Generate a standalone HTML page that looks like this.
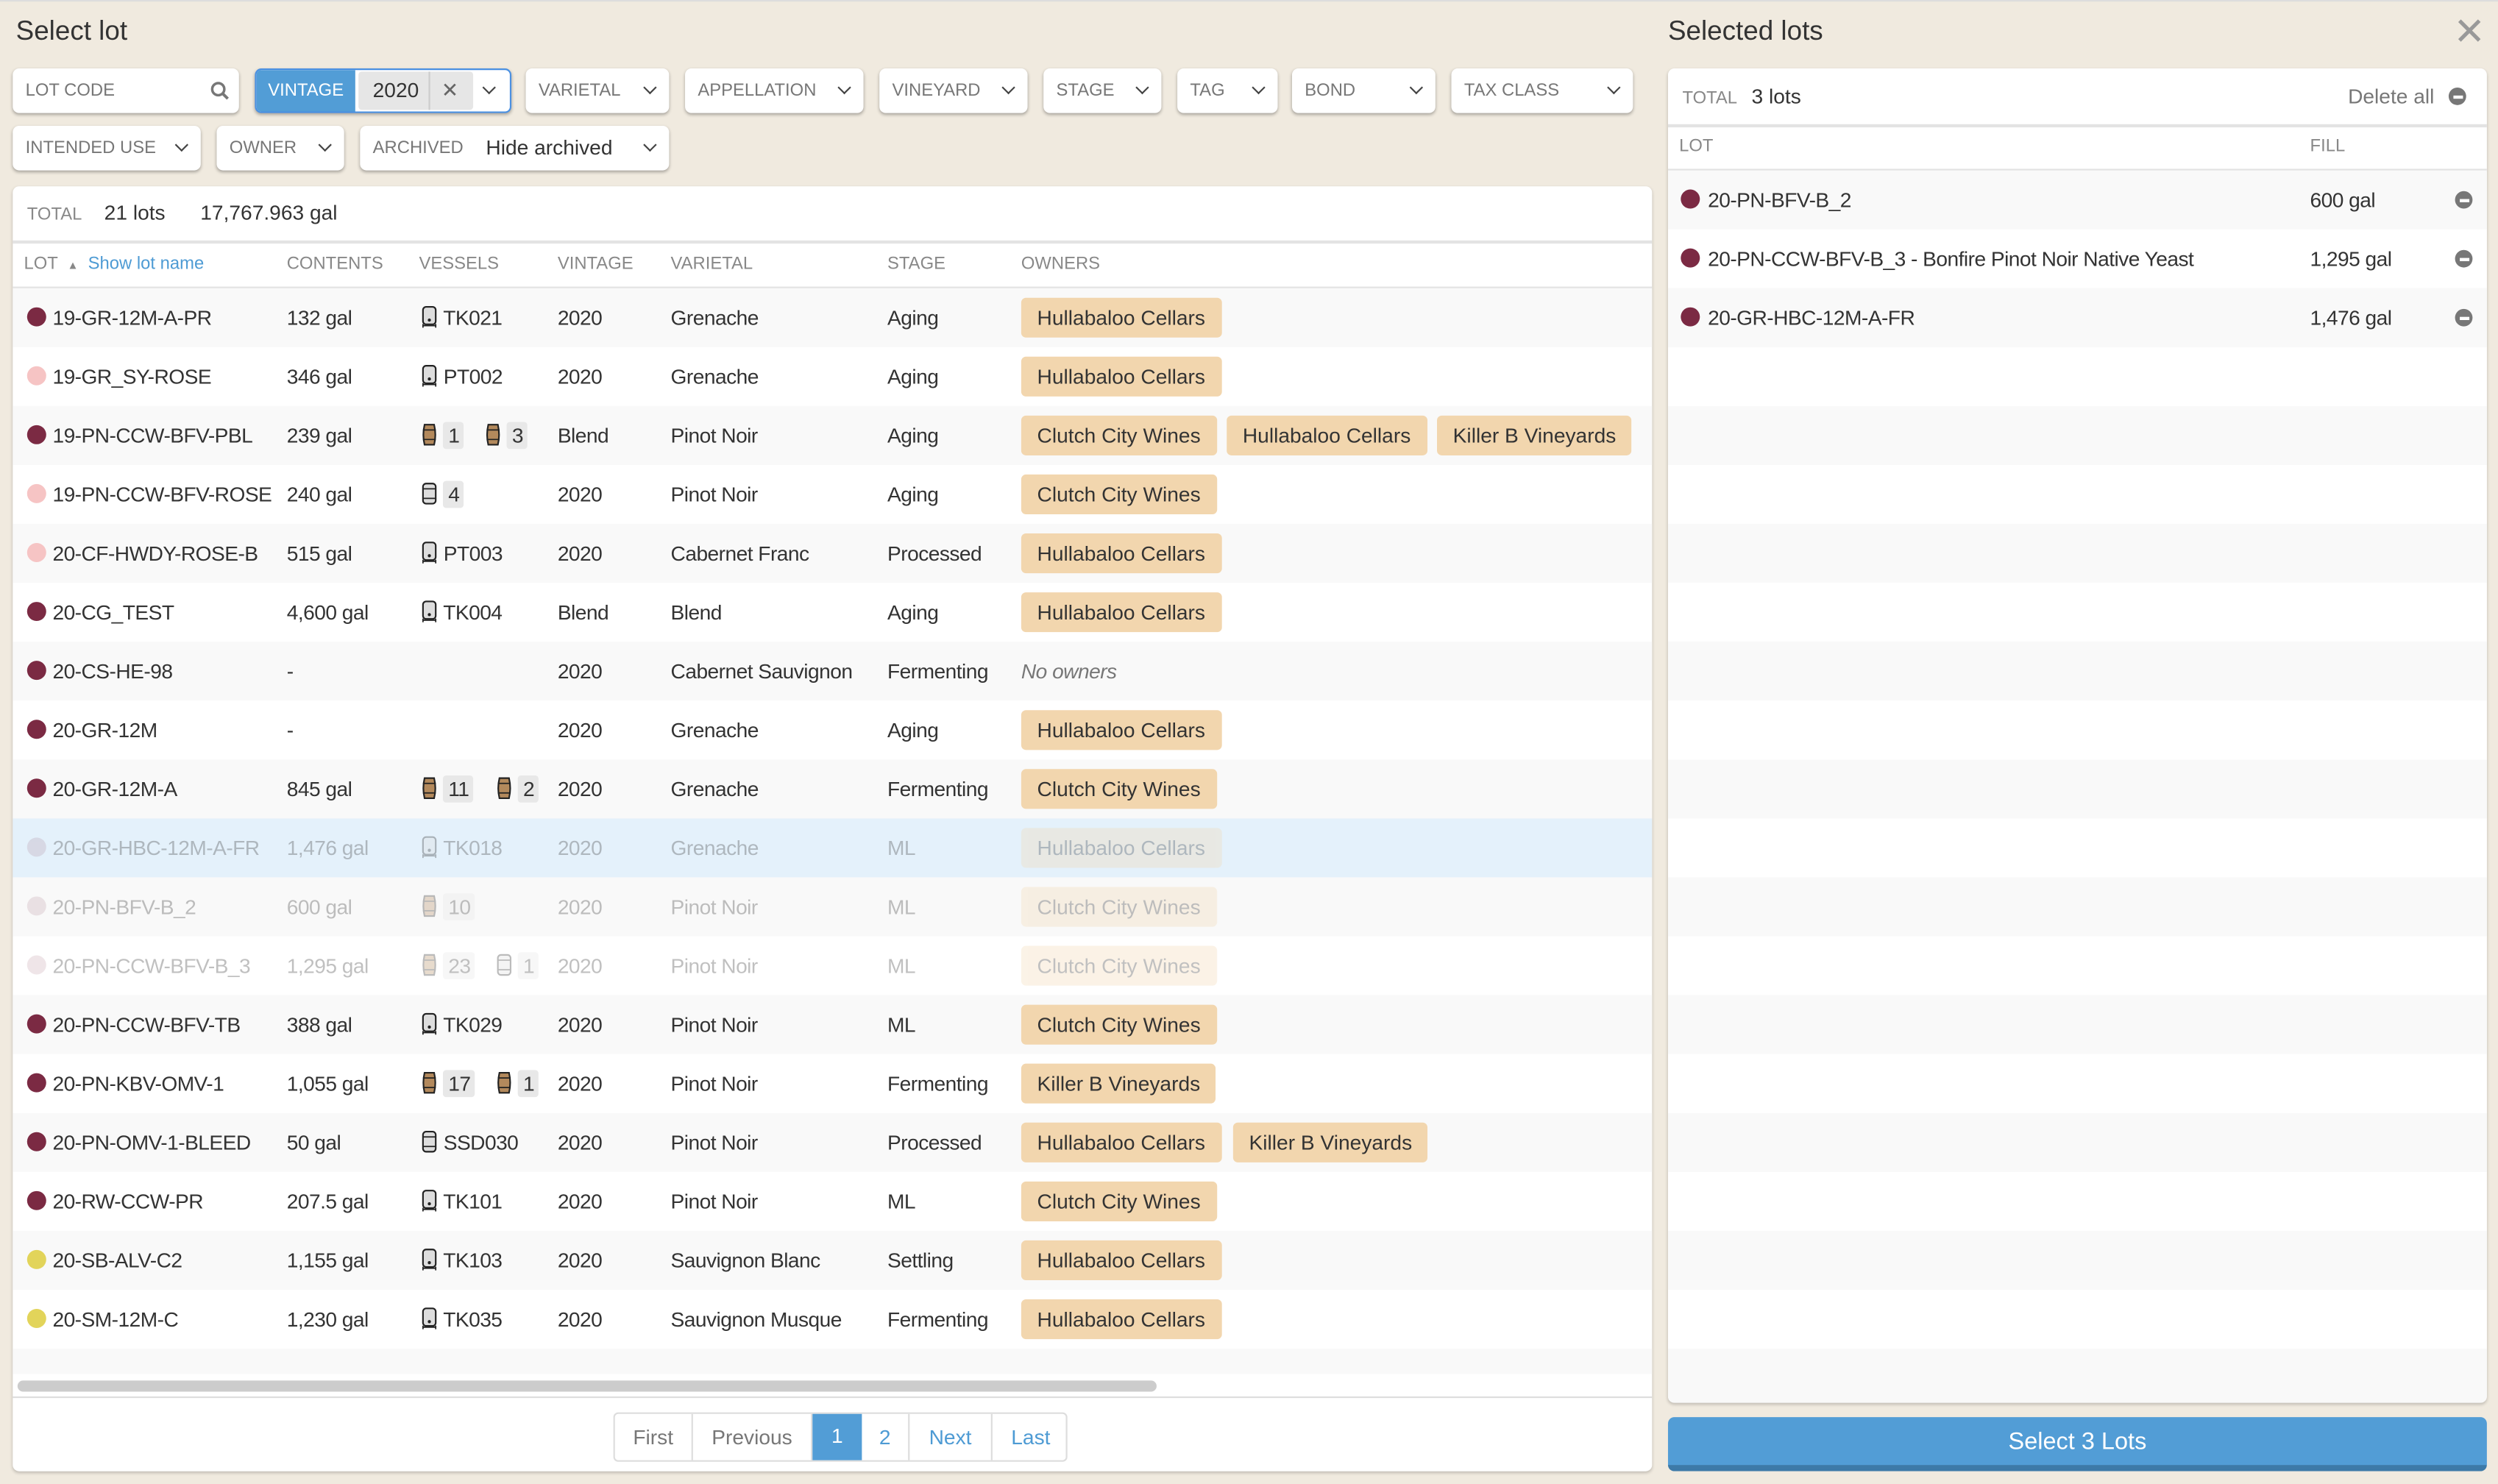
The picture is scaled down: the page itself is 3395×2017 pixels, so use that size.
<!DOCTYPE html>
<html><head><meta charset="utf-8"><style>
*{box-sizing:border-box;margin:0;padding:0}
html,body{width:3395px;height:2017px;overflow:hidden;background:#f0eadf}
#s{position:absolute;left:0;top:0;width:1568px;height:932px;transform:scale(2.1652,2.1642);transform-origin:0 0;font-family:"Liberation Sans",sans-serif;color:#333;font-size:13px;background:#f0eadf;border-top:1px solid #ddd}
.a{position:absolute}
.h{font-size:17px;color:#333}
.f{position:absolute;height:28px;background:#fff;border-radius:4px;box-shadow:0 1px 2px rgba(0,0,0,.3);font-size:11px;color:#777;line-height:28px;padding-left:8px}
.chev{display:inline-block;width:6px;height:6px;border-right:1.2px solid #444;border-bottom:1.2px solid #444;transform:rotate(45deg);position:absolute;top:9px}
.panel{position:absolute;background:#fff;border-radius:4px;box-shadow:0 1px 2px rgba(0,0,0,.2)}
.row{position:absolute;left:0;right:0;height:37px;line-height:37px;white-space:nowrap;letter-spacing:-0.25px}
.row span{position:absolute}
.odd{background:#f9f9f9}
.dot{display:inline-block;width:12px;height:12px;border-radius:50%;position:absolute;top:12px;left:9px}
.tag{position:absolute;top:6px;height:25px;line-height:25px;background:#f2d6ae;border-radius:3px;padding:0 10px 0 10px;color:#333;letter-spacing:0}
.cnt{background:#e8e8e8;padding:0 3px;border-radius:2px;line-height:17px;display:inline-block}
.th{font-size:11px;color:#888;position:absolute;top:0;line-height:29px}
.fade{opacity:.3}
.min{position:absolute;width:11px;height:11px;border-radius:50%;background:#777;top:13px}
.min:after{content:"";position:absolute;left:2.5px;top:4.5px;width:6px;height:2px;background:#fff}
.pg{position:absolute;top:0;height:30px;line-height:30px;text-align:center;border-right:1px solid #ddd;color:#4e9bd4;font-size:13px}
</style></head><body><div id="s">
<div class="a h" style="left:10px;top:9px">Select lot</div>
<div class="a h" style="left:1047px;top:9px">Selected lots</div>
<div class="a" style="left:1540px;top:5px;font-size:24px;color:#999;font-weight:300">✕</div>

<div class="f" style="left:8px;top:42px;width:142px">LOT CODE<svg class="a" style="right:6px;top:8px" width="12" height="12" viewBox="0 0 12 12"><circle cx="5" cy="5" r="3.8" fill="none" stroke="#777" stroke-width="1.6"/><path d="M8 8l3 3" stroke="#777" stroke-width="1.8"/></svg></div>
<div class="f" style="left:160px;top:42px;width:161px;padding:0;border:1px solid #4a90e2;overflow:hidden"><div class="a" style="left:0;top:0;width:62px;height:28px;background:#529dd6;color:#fff;text-align:center;line-height:26px">VINTAGE</div><div class="a" style="left:64px;top:1px;width:72px;height:24px;background:#e6e6e6;border-radius:2px;line-height:24px;color:#333;font-size:13px;padding-left:9px">2020<span class="a" style="left:44px;top:0;width:1px;height:24px;background:#ccc"></span><span class="a" style="left:52px;color:#666">✕</span></div><span class="chev" style="right:10px;top:8px"></span></div>
<div class="f" style="left:330px;top:42px;width:90px">VARIETAL<span class="chev" style="right:9px"></span></div>
<div class="f" style="left:430px;top:42px;width:112px">APPELLATION<span class="chev" style="right:9px"></span></div>
<div class="f" style="left:552px;top:42px;width:93px">VINEYARD<span class="chev" style="right:9px"></span></div>
<div class="f" style="left:655px;top:42px;width:74px">STAGE<span class="chev" style="right:9px"></span></div>
<div class="f" style="left:739px;top:42px;width:63px">TAG<span class="chev" style="right:9px"></span></div>
<div class="f" style="left:811px;top:42px;width:90px">BOND<span class="chev" style="right:9px"></span></div>
<div class="f" style="left:911px;top:42px;width:114px">TAX CLASS<span class="chev" style="right:9px"></span></div>
<div class="f" style="left:8px;top:78px;width:118px">INTENDED USE<span class="chev" style="right:9px"></span></div>
<div class="f" style="left:136px;top:78px;width:80px">OWNER<span class="chev" style="right:9px"></span></div>
<div class="f" style="left:226px;top:78px;width:194px">ARCHIVED<span class="a" style="left:79px;color:#333;font-size:13px">Hide archived</span><span class="chev" style="right:9px"></span></div>

<div class="panel" style="left:8px;top:116px;width:1029px;height:807px;overflow:hidden">
<div class="a" style="left:9px;top:0;line-height:34px"><span style="font-size:11px;color:#888">TOTAL</span><span style="margin-left:14px">21 lots</span><span style="margin-left:22px">17,767.963 gal</span></div>
<div class="a" style="left:0;right:0;top:34px;height:2px;background:#e3e3e3"></div>
<div class="a" style="left:0;right:0;top:35px;height:29px">
<span class="th" style="left:7px">LOT <span style="font-size:7px;margin-left:3px">▲</span> <span style="color:#4e9bd4;font-size:11px;margin-left:3px">Show lot name</span></span>
<span class="th" style="left:172px">CONTENTS</span><span class="th" style="left:255px">VESSELS</span><span class="th" style="left:342px">VINTAGE</span><span class="th" style="left:413px">VARIETAL</span><span class="th" style="left:549px">STAGE</span><span class="th" style="left:633px">OWNERS</span></div>
<div class="a" style="left:0;right:0;top:63px;height:2px;background:#e3e3e3"></div>
<div class="a" style="left:0;right:0;top:64px;bottom:0" id="rows">
<svg width="0" height="0" style="position:absolute"><defs>
<symbol id="tk" viewBox="0 0 10 14"><rect x="1" y="0.7" width="8" height="11" rx="2" fill="#ddd" stroke="#222" stroke-width="1"/><circle cx="5" cy="9" r="1" fill="#222"/><path d="M1 11.5v2.3M9 11.5v2.3M1 12.5h8" stroke="#222" stroke-width="0.8"/></symbol>
<symbol id="br" viewBox="0 0 10 14"><path d="M2 0.7h6q1.5 6.3 0 12.6h-6q-1.5-6.3 0-12.6z" fill="#b3895c" stroke="#222" stroke-width="1"/><path d="M1 4h8M1 10h8" stroke="#222" stroke-width="0.8"/></symbol>
<symbol id="ss" viewBox="0 0 10 14"><rect x="1" y="0.7" width="8" height="12.6" rx="2" fill="#ddd" stroke="#222" stroke-width="1"/><path d="M1 4h8M1 10h8" stroke="#222" stroke-width="0.8"/></symbol>
</defs></svg>

<div class="row odd" style="top:0"><i class="dot" style="background:#7b2a43"></i><span style="left:25px">19-GR-12M-A-PR</span><span style="left:172px">132 gal</span><span style="left:256px"><svg width="11" height="14" style="vertical-align:-2px"><use href="#tk"/></svg> TK021</span><span style="left:342px">2020</span><span style="left:413px">Grenache</span><span style="left:549px">Aging</span><div class="tag" style="left:633px">Hullabaloo Cellars</div></div>
<div class="row" style="top:37px"><i class="dot" style="background:#f6c4c4"></i><span style="left:25px">19-GR_SY-ROSE</span><span style="left:172px">346 gal</span><span style="left:256px"><svg width="11" height="14" style="vertical-align:-2px"><use href="#tk"/></svg> PT002</span><span style="left:342px">2020</span><span style="left:413px">Grenache</span><span style="left:549px">Aging</span><div class="tag" style="left:633px">Hullabaloo Cellars</div></div>
<div class="row odd" style="top:74px"><i class="dot" style="background:#7b2a43"></i><span style="left:25px">19-PN-CCW-BFV-PBL</span><span style="left:172px">239 gal</span><span style="left:256px"><svg width="11" height="14" style="vertical-align:-2px"><use href="#br"/></svg> <b class="cnt" style="font-weight:normal">1</b></span><span style="left:296px"><svg width="11" height="14" style="vertical-align:-2px"><use href="#br"/></svg> <b class="cnt" style="font-weight:normal">3</b></span><span style="left:342px">Blend</span><span style="left:413px">Pinot Noir</span><span style="left:549px">Aging</span><div class="tag" style="left:633px">Clutch City Wines</div><div class="tag" style="left:762px">Hullabaloo Cellars</div><div class="tag" style="left:894px">Killer B Vineyards</div></div>
<div class="row" style="top:111px"><i class="dot" style="background:#f6c4c4"></i><span style="left:25px">19-PN-CCW-BFV-ROSE</span><span style="left:172px">240 gal</span><span style="left:256px"><svg width="11" height="14" style="vertical-align:-2px"><use href="#ss"/></svg> <b class="cnt" style="font-weight:normal">4</b></span><span style="left:342px">2020</span><span style="left:413px">Pinot Noir</span><span style="left:549px">Aging</span><div class="tag" style="left:633px">Clutch City Wines</div></div>
<div class="row odd" style="top:148px"><i class="dot" style="background:#f6c4c4"></i><span style="left:25px">20-CF-HWDY-ROSE-B</span><span style="left:172px">515 gal</span><span style="left:256px"><svg width="11" height="14" style="vertical-align:-2px"><use href="#tk"/></svg> PT003</span><span style="left:342px">2020</span><span style="left:413px">Cabernet Franc</span><span style="left:549px">Processed</span><div class="tag" style="left:633px">Hullabaloo Cellars</div></div>
<div class="row" style="top:185px"><i class="dot" style="background:#7b2a43"></i><span style="left:25px">20-CG_TEST</span><span style="left:172px">4,600 gal</span><span style="left:256px"><svg width="11" height="14" style="vertical-align:-2px"><use href="#tk"/></svg> TK004</span><span style="left:342px">Blend</span><span style="left:413px">Blend</span><span style="left:549px">Aging</span><div class="tag" style="left:633px">Hullabaloo Cellars</div></div>
<div class="row odd" style="top:222px"><i class="dot" style="background:#7b2a43"></i><span style="left:25px">20-CS-HE-98</span><span style="left:172px">-</span><span style="left:342px">2020</span><span style="left:413px">Cabernet Sauvignon</span><span style="left:549px">Fermenting</span><span style="left:633px;font-style:italic;color:#777">No owners</span></div>
<div class="row" style="top:259px"><i class="dot" style="background:#7b2a43"></i><span style="left:25px">20-GR-12M</span><span style="left:172px">-</span><span style="left:342px">2020</span><span style="left:413px">Grenache</span><span style="left:549px">Aging</span><div class="tag" style="left:633px">Hullabaloo Cellars</div></div>
<div class="row odd" style="top:296px"><i class="dot" style="background:#7b2a43"></i><span style="left:25px">20-GR-12M-A</span><span style="left:172px">845 gal</span><span style="left:256px"><svg width="11" height="14" style="vertical-align:-2px"><use href="#br"/></svg> <b class="cnt" style="font-weight:normal">11</b></span><span style="left:303px"><svg width="11" height="14" style="vertical-align:-2px"><use href="#br"/></svg> <b class="cnt" style="font-weight:normal">2</b></span><span style="left:342px">2020</span><span style="left:413px">Grenache</span><span style="left:549px">Fermenting</span><div class="tag" style="left:633px">Clutch City Wines</div></div>
<div class="row" style="top:333px;background:#e4f1fb"><div class="fade"><i class="dot" style="background:#7b2a43;opacity:.4"></i><span style="left:25px">20-GR-HBC-12M-A-FR</span><span style="left:172px">1,476 gal</span><span style="left:256px"><svg width="11" height="14" style="vertical-align:-2px"><use href="#tk"/></svg> TK018</span><span style="left:342px">2020</span><span style="left:413px">Grenache</span><span style="left:549px">ML</span><div class="tag" style="left:633px">Hullabaloo Cellars</div></div></div>
<div class="row odd" style="top:370px"><div class="fade"><i class="dot" style="background:#7b2a43;opacity:.4"></i><span style="left:25px">20-PN-BFV-B_2</span><span style="left:172px">600 gal</span><span style="left:256px"><svg width="11" height="14" style="vertical-align:-2px"><use href="#br"/></svg> <b class="cnt" style="font-weight:normal">10</b></span><span style="left:342px">2020</span><span style="left:413px">Pinot Noir</span><span style="left:549px">ML</span><div class="tag" style="left:633px">Clutch City Wines</div></div></div>
<div class="row" style="top:407px"><div class="fade"><i class="dot" style="background:#7b2a43;opacity:.4"></i><span style="left:25px">20-PN-CCW-BFV-B_3</span><span style="left:172px">1,295 gal</span><span style="left:256px"><svg width="11" height="14" style="vertical-align:-2px"><use href="#br"/></svg> <b class="cnt" style="font-weight:normal">23</b></span><span style="left:303px"><svg width="11" height="14" style="vertical-align:-2px"><use href="#ss"/></svg> <b class="cnt" style="font-weight:normal">1</b></span><span style="left:342px">2020</span><span style="left:413px">Pinot Noir</span><span style="left:549px">ML</span><div class="tag" style="left:633px">Clutch City Wines</div></div></div>
<div class="row odd" style="top:444px"><i class="dot" style="background:#7b2a43"></i><span style="left:25px">20-PN-CCW-BFV-TB</span><span style="left:172px">388 gal</span><span style="left:256px"><svg width="11" height="14" style="vertical-align:-2px"><use href="#tk"/></svg> TK029</span><span style="left:342px">2020</span><span style="left:413px">Pinot Noir</span><span style="left:549px">ML</span><div class="tag" style="left:633px">Clutch City Wines</div></div>
<div class="row" style="top:481px"><i class="dot" style="background:#7b2a43"></i><span style="left:25px">20-PN-KBV-OMV-1</span><span style="left:172px">1,055 gal</span><span style="left:256px"><svg width="11" height="14" style="vertical-align:-2px"><use href="#br"/></svg> <b class="cnt" style="font-weight:normal">17</b></span><span style="left:303px"><svg width="11" height="14" style="vertical-align:-2px"><use href="#br"/></svg> <b class="cnt" style="font-weight:normal">1</b></span><span style="left:342px">2020</span><span style="left:413px">Pinot Noir</span><span style="left:549px">Fermenting</span><div class="tag" style="left:633px">Killer B Vineyards</div></div>
<div class="row odd" style="top:518px"><i class="dot" style="background:#7b2a43"></i><span style="left:25px">20-PN-OMV-1-BLEED</span><span style="left:172px">50 gal</span><span style="left:256px"><svg width="11" height="14" style="vertical-align:-2px"><use href="#ss"/></svg> SSD030</span><span style="left:342px">2020</span><span style="left:413px">Pinot Noir</span><span style="left:549px">Processed</span><div class="tag" style="left:633px">Hullabaloo Cellars</div><div class="tag" style="left:766px">Killer B Vineyards</div></div>
<div class="row" style="top:555px"><i class="dot" style="background:#7b2a43"></i><span style="left:25px">20-RW-CCW-PR</span><span style="left:172px">207.5 gal</span><span style="left:256px"><svg width="11" height="14" style="vertical-align:-2px"><use href="#tk"/></svg> TK101</span><span style="left:342px">2020</span><span style="left:413px">Pinot Noir</span><span style="left:549px">ML</span><div class="tag" style="left:633px">Clutch City Wines</div></div>
<div class="row odd" style="top:592px"><i class="dot" style="background:#e2d45a"></i><span style="left:25px">20-SB-ALV-C2</span><span style="left:172px">1,155 gal</span><span style="left:256px"><svg width="11" height="14" style="vertical-align:-2px"><use href="#tk"/></svg> TK103</span><span style="left:342px">2020</span><span style="left:413px">Sauvignon Blanc</span><span style="left:549px">Settling</span><div class="tag" style="left:633px">Hullabaloo Cellars</div></div>
<div class="row" style="top:629px"><i class="dot" style="background:#e2d45a"></i><span style="left:25px">20-SM-12M-C</span><span style="left:172px">1,230 gal</span><span style="left:256px"><svg width="11" height="14" style="vertical-align:-2px"><use href="#tk"/></svg> TK035</span><span style="left:342px">2020</span><span style="left:413px">Sauvignon Musque</span><span style="left:549px">Fermenting</span><div class="tag" style="left:633px">Hullabaloo Cellars</div></div>
<div class="row odd" style="top:666px;height:16px"></div>
</div>
<div class="a" style="left:3px;top:750px;width:715px;height:7px;border-radius:4px;background:#ccc"></div>
<div class="a" style="left:0;right:0;top:760px;height:1px;background:#ddd"></div>
<div class="a" style="left:377px;top:770px;width:285px;height:31px;border:1px solid #ddd;border-radius:3px;overflow:hidden">
<div class="pg" style="left:0;width:49px;color:#777">First</div><div class="pg" style="left:49px;width:75px;color:#777">Previous</div><div class="pg" style="left:124px;width:31px;background:#529dd6;color:#fff;border:0;top:-1px;height:31px">1</div><div class="pg" style="left:155px;width:30px">2</div><div class="pg" style="left:185px;width:52px">Next</div><div class="pg" style="left:237px;width:48px;border:0">Last</div></div>
</div>

<div class="panel" style="left:1047px;top:42px;width:514px;height:838px;overflow:hidden;background:#fff">
<div class="a" style="left:9px;top:0;line-height:35px"><span style="font-size:11px;color:#888">TOTAL</span><span style="margin-left:9px">3 lots</span></div>
<div class="a" style="right:33px;top:0;line-height:35px;color:#777">Delete all</div><i class="min" style="right:13px;top:12px"></i>
<div class="a" style="left:0;right:0;top:35px;height:2px;background:#e3e3e3"></div>
<div class="th" style="left:7px;top:35px">LOT</div><div class="th" style="left:403px;top:35px">FILL</div>
<div class="a" style="left:0;right:0;top:63px;height:2px;background:#e3e3e3"></div>
<div class="a" style="left:0;right:0;top:64px;bottom:0;background:repeating-linear-gradient(#f9f9f9 0 37px,#fff 37px 74px)">
<div class="row" style="top:0"><i class="dot" style="background:#7b2a43;left:8px"></i><span style="left:25px">20-PN-BFV-B_2</span><span style="left:403px">600 gal</span><i class="min" style="right:9px"></i></div>
<div class="row" style="top:37px"><i class="dot" style="background:#7b2a43;left:8px"></i><span style="left:25px">20-PN-CCW-BFV-B_3 - Bonfire Pinot Noir Native Yeast</span><span style="left:403px">1,295 gal</span><i class="min" style="right:9px"></i></div>
<div class="row" style="top:74px"><i class="dot" style="background:#7b2a43;left:8px"></i><span style="left:25px">20-GR-HBC-12M-A-FR</span><span style="left:403px">1,476 gal</span><i class="min" style="right:9px"></i></div>
</div></div>
<div class="a" style="left:1047px;top:889px;width:514px;height:34px;background:#529dd6;border-bottom:4px solid #3d7aa8;border-radius:4px;color:#fff;text-align:center;line-height:31px;font-size:15px">Select 3 Lots</div>
</div></body></html>
